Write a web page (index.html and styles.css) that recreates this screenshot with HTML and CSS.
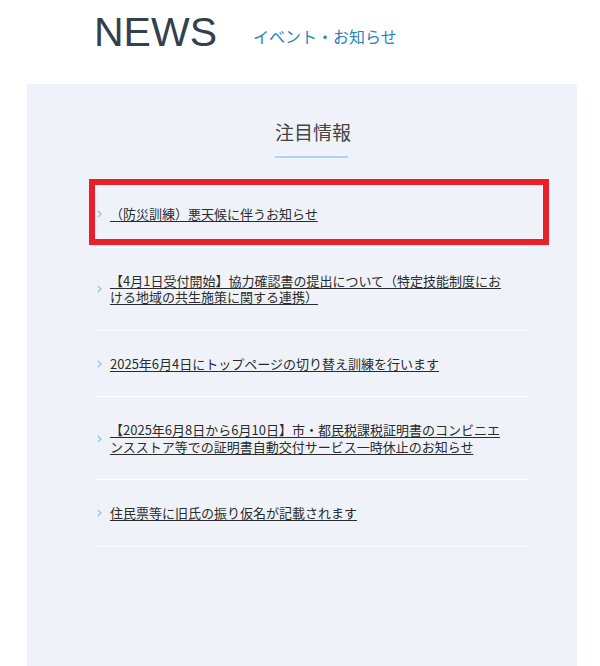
FILE: index.html
```html
<!DOCTYPE html>
<html lang="ja">
<head>
<meta charset="utf-8">
<title>NEWS</title>
<link rel="stylesheet" href="styles.css">
</head>
<body>
<header class="page-header">
  <h1 class="page-title">NEWS</h1>
  <span class="page-sub">イベント・お知らせ</span>
</header>
<section class="panel">
  <div class="panel-inner">
    <h2 class="section-title">注目情報</h2>
    <ul class="news-list">
      <li class="news-item">
        <svg class="chev" viewBox="0 0 5 8" width="5" height="8"><path d="M0.8 0.8 L4 4 L0.8 7.2" fill="none" stroke="#98cbee" stroke-width="1.5"/></svg>
        <a class="news-link" href="#">（防災訓練）悪天候に伴うお知らせ</a>
      </li>
      <li class="news-item">
        <svg class="chev" viewBox="0 0 5 8" width="5" height="8"><path d="M0.8 0.8 L4 4 L0.8 7.2" fill="none" stroke="#98cbee" stroke-width="1.5"/></svg>
        <a class="news-link" href="#">【4月1日受付開始】協力確認書の提出について（特定技能制度における地域の共生施策に関する連携）</a>
      </li>
      <li class="news-item">
        <svg class="chev" viewBox="0 0 5 8" width="5" height="8"><path d="M0.8 0.8 L4 4 L0.8 7.2" fill="none" stroke="#98cbee" stroke-width="1.5"/></svg>
        <a class="news-link" href="#">2025年6月4日にトップページの切り替え訓練を行います</a>
      </li>
      <li class="news-item">
        <svg class="chev" viewBox="0 0 5 8" width="5" height="8"><path d="M0.8 0.8 L4 4 L0.8 7.2" fill="none" stroke="#98cbee" stroke-width="1.5"/></svg>
        <a class="news-link" href="#">【2025年6月8日から6月10日】市・都民税課税証明書のコンビニエンスストア等での証明書自動交付サービス一時休止のお知らせ</a>
      </li>
      <li class="news-item">
        <svg class="chev" viewBox="0 0 5 8" width="5" height="8"><path d="M0.8 0.8 L4 4 L0.8 7.2" fill="none" stroke="#98cbee" stroke-width="1.5"/></svg>
        <a class="news-link" href="#">住民票等に旧氏の振り仮名が記載されます</a>
      </li>
    </ul>
  </div>
  <div class="highlight-box"></div>
</section>
</body>
</html>
```

FILE: styles.css
```css
html, body {
  margin: 0;
  padding: 0;
  background: #ffffff;
}
body {
  font-family: "Noto Sans CJK JP", "Noto Sans", sans-serif;
  color: #333;
  overflow: hidden;
  height: 666px;
}
.page-header {
  display: flex;
  align-items: baseline;
  height: 84px;
  box-sizing: border-box;
  padding: 8px 0 0 94px;
}
.page-title {
  margin: 0;
  font-family: "Liberation Sans", Arial, sans-serif;
  font-weight: normal;
  font-size: 41px;
  line-height: 48px;
  color: #34404d;
}
.page-sub {
  margin-left: 36px;
  font-size: 16px;
  color: #2a86b8;
  position: relative;
  top: -3px;
}
.panel {
  position: relative;
  margin-left: 27px;
  width: 550px;
  min-height: 600px;
  background: #eff3f9;
  padding: 0 48px 0 67px;
  box-sizing: border-box;
}
.panel-inner {
  padding-top: 34px;
}
.section-title {
  margin: 0 auto;
  width: 73px;
  text-align: center;
  font-size: 19px;
  font-weight: normal;
  line-height: 28px;
  color: #444;
  padding-bottom: 10px;
  border-bottom: 2px solid #acd6ef;
  white-space: nowrap;
}
.news-list {
  list-style: none;
  margin: 23px 0 0;
  padding: 0;
}
.news-item {
  display: flex;
  align-items: center;
  padding: 25px 19px 24px 0;
  border-bottom: 1px solid #ffffff;
}
.chev {
  flex: none;
  margin: 0 8px 0 3px;
}
.news-link {
  font-size: 13px;
  line-height: 16.5px;
  color: #2b2b2b;
  text-decoration: underline;
  text-underline-offset: 2px;
}
.highlight-box {
  position: absolute;
  left: 62px;
  top: 95px;
  width: 460px;
  height: 66px;
  box-sizing: border-box;
  border: 6px solid #e8202a;
}
```
